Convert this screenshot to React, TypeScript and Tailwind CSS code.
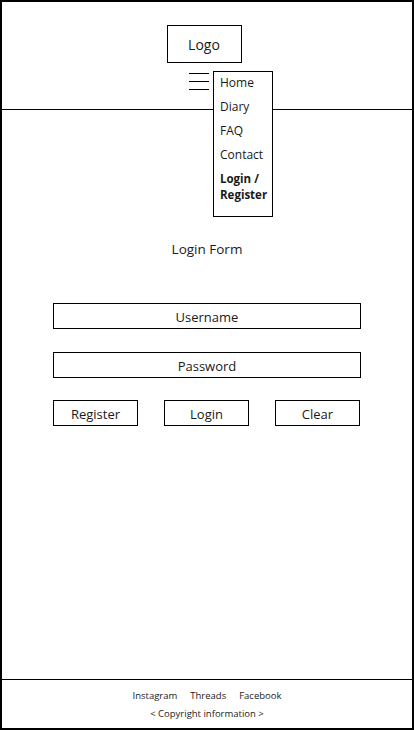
const font = { fontFamily: '"Open Sans", "Noto Sans", sans-serif' };

const menuItems = ["Home", "Diary", "FAQ", "Contact"];

export default function App() {
  return (
    <div
      className="w-[414px] h-[730px] border-2 border-black bg-white flex flex-col text-[#1a1a1a]"
      style={font}
    >
      {/* Header */}
      <header className="h-[108px] shrink-0 border-b border-black flex flex-col items-center pt-[23px]">
        <div className="w-[75px] h-[38px] mr-[6px] border border-black flex items-center justify-center text-[14px]">
          Logo
        </div>
        <div className="relative w-[20px] mr-[16px] mt-[8px] pt-[2px] flex flex-col gap-[7px]">
          <div className="h-px bg-black" />
          <div className="h-px bg-black" />
          <div className="h-px bg-black" />
          <nav className="absolute left-[24px] top-0 z-10 w-[60px] h-[146px] border border-black bg-white pt-[3px] px-[6px] flex flex-col gap-[8px] text-[12px] leading-[16px]">
            {menuItems.map((item) => (
              <span key={item}>{item}</span>
            ))}
            <span className="font-bold text-[11.5px]">
              Login /
              <br />
              Register
            </span>
          </nav>
        </div>
      </header>

      {/* Login form */}
      <main className="flex-1 flex flex-col items-center">
        <h1 className="mt-[129px] text-[13.5px] leading-[20px]">Login Form</h1>
        <div className="mt-[44px] w-[308px] flex flex-col gap-[23px]">
          <div className="h-[26px] pt-[3px] border border-black flex items-center justify-center text-[13px]">
            Username
          </div>
          <div className="h-[26px] pt-[3px] border border-black flex items-center justify-center text-[13px]">
            Password
          </div>
        </div>
        <div className="mt-[22px] w-[307px] mr-[1px] flex justify-between">
          {["Register", "Login", "Clear"].map((b) => (
            <div
              key={b}
              className="w-[85px] h-[26px] pt-[3px] border border-black flex items-center justify-center text-[13px]"
            >
              {b}
            </div>
          ))}
        </div>
      </main>

      {/* Footer */}
      <footer className="h-[49px] shrink-0 border-t border-black flex flex-col items-center pt-[9px] gap-[4px] text-[9.5px] leading-[14px]">
        <div className="flex gap-[13px]">
          <span>Instagram</span>
          <span>Threads</span>
          <span>Facebook</span>
        </div>
        <div>&lt; Copyright information &gt;</div>
      </footer>
    </div>
  );
}
